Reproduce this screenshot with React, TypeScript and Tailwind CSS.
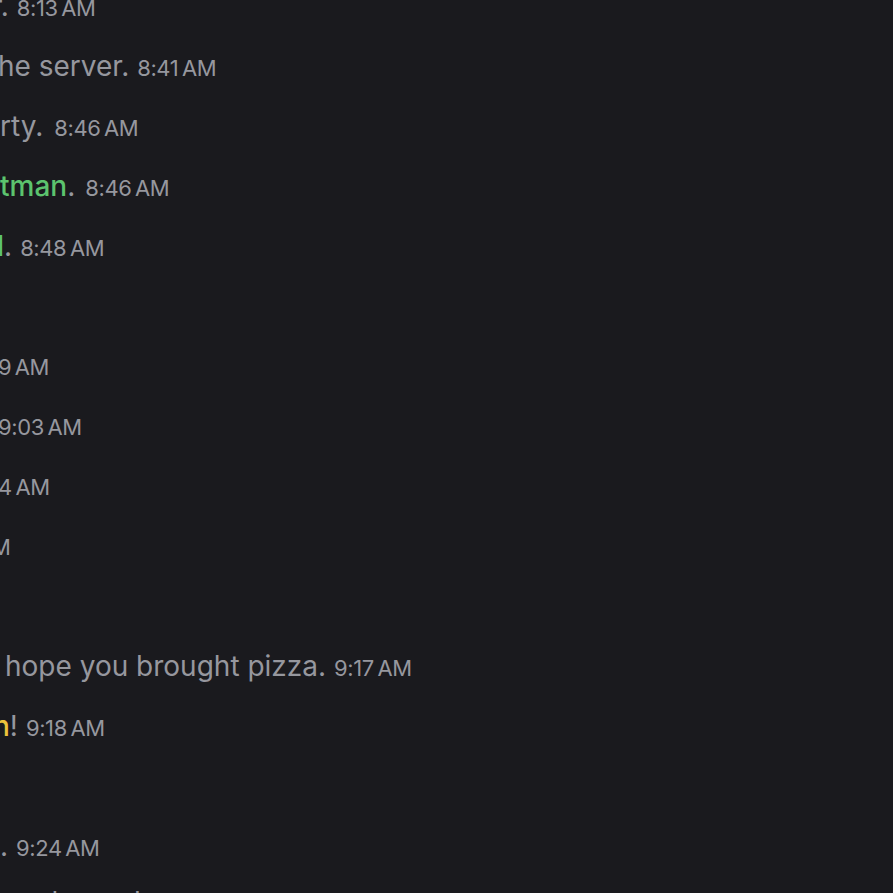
import React from "react";

type Seg = { t: string; c?: "g" | "y" };
type Row = { row?: string; shift: string; gap?: string; segs: Seg[]; time?: string } | null;

const T = "\u2009";

const rows: Row[] = [
  { shift: "-ml-[8px]", gap: "ml-[8px]", segs: [{ t: "r." }], time: `8:13${T}AM` },
  { shift: "-ml-[2px]", gap: "ml-[8px]", segs: [{ t: "he server." }], time: `8:41${T}AM` },
  { shift: "ml-0", gap: "ml-[11px]", segs: [{ t: "rty." }], time: `8:46${T}AM` },
  { shift: "ml-0", gap: "ml-[10px]", segs: [{ t: "tman", c: "g" }, { t: "." }], time: `8:46${T}AM` },
  { shift: "-ml-[3px]", gap: "ml-[8px]", segs: [{ t: "l", c: "g" }, { t: "." }], time: `8:48${T}AM` },
  null,
  { shift: "-ml-[2px]", segs: [], time: `9${T}AM` },
  { shift: "-ml-[2px]", segs: [], time: `9:03${T}AM` },
  { shift: "-ml-[2px]", segs: [], time: `4${T}AM` },
  { shift: "-ml-[9px]", segs: [], time: "M" },
  null,
  { shift: "ml-[5px]", gap: "ml-[8px]", segs: [{ t: "hope you brought pizza." }], time: `9:17${T}AM` },
  { shift: "-ml-[7px]", gap: "ml-[8px]", segs: [{ t: "n", c: "y" }, { t: "!" }], time: `9:18${T}AM` },
  null,
  { shift: "ml-0", gap: "ml-[8px]", segs: [{ t: "." }], time: `9:24${T}AM` },
  { row: "-mt-[5px]", shift: "-ml-[6px]", segs: [{ t: "one huge, brave" }] },
];

export default function App() {
  return (
    <div className="w-[893px] h-[893px] overflow-hidden bg-[#1a1a1e] text-[#96979e] font-['Inter','Noto_Sans',sans-serif]">
      <div className="-mt-[23px] flex flex-col">
        {rows.map((r, i) => (
          <div key={i} className={`h-[60px] flex items-center whitespace-nowrap ${r?.row ?? ""}`}>
            {r && (
              <div className={`flex items-baseline ${r.shift}`}>
                {r.segs.length > 0 && (
                  <span className="text-[28px] leading-[34px]">
                    {r.segs.map((s, j) => (
                      <span
                        key={j}
                        className={
                          s.c === "g"
                            ? "text-[#5cc46e] font-medium"
                            : s.c === "y"
                            ? "text-[#ecc23c] font-medium"
                            : ""
                        }
                      >
                        {s.t}
                      </span>
                    ))}
                  </span>
                )}
                {r.time && (
                  <span className={`text-[22px] leading-[34px] tracking-[-0.4px] ${r.gap ?? ""}`}>
                    {r.time}
                  </span>
                )}
              </div>
            )}
          </div>
        ))}
      </div>
    </div>
  );
}
